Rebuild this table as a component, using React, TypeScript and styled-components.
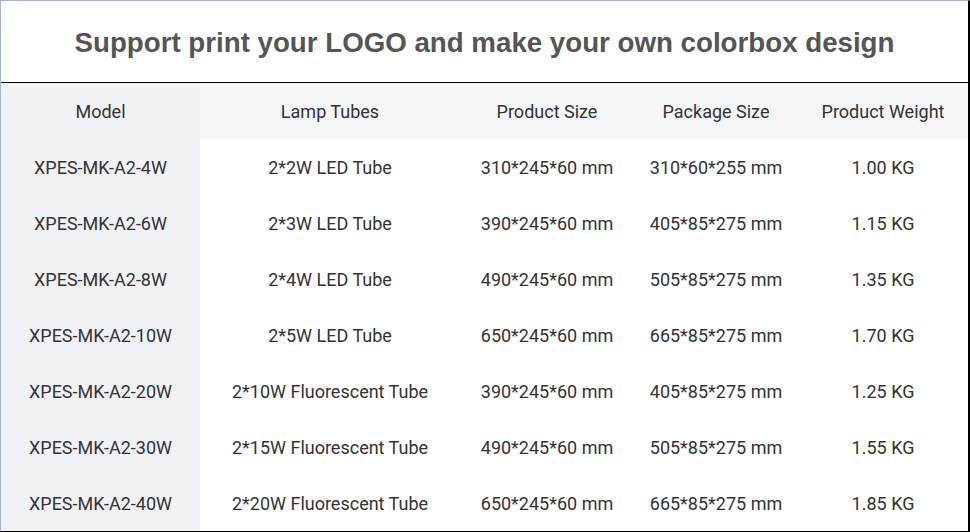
import React from "react";
import styled, { createGlobalStyle } from "styled-components";

const Global = createGlobalStyle`
  html, body { margin: 0; padding: 0; background: #ffffff; }
  * { box-sizing: border-box; }
`;

const Frame = styled.div`
  position: relative;
  width: 970px;
  height: 532px;
  overflow: hidden;
  background: #ffffff;
  border-top: 1px solid #aab3cb;
  border-left: 1px solid #aab3cb;
  border-right: 2px solid #000000;
  border-bottom: 1px solid #000000;
`;

const ScrollMark = styled.div`
  position: absolute;
  left: -1px;
  top: 418px;
  width: 1px;
  height: 57px;
  background: #1fc07a;
`;

const Title = styled.h1`
  margin: 0;
  height: 82px;
  padding-top: 2px;
  display: flex;
  align-items: center;
  justify-content: center;
  font-family: "Liberation Sans", Arial, sans-serif;
  font-weight: 700;
  font-size: 27.7px;
  color: #555555;
  border-bottom: 1px solid #000000;
`;

const Grid = styled.div`
  display: grid;
  grid-template-columns: 199px 260px 174px 164px 170px;
  grid-auto-rows: 56px;
`;

const Cell = styled.div<{ $head?: boolean; $first?: boolean }>`
  display: flex;
  align-items: center;
  justify-content: center;
  font-family: Roboto, "Liberation Sans", sans-serif;
  font-size: 18px;
  color: #333333;
  white-space: nowrap;
  background: ${(p) => (p.$first ? "#f1f2f6" : p.$head ? "#f5f6f8" : "#ffffff")};
`;

const headers = ["Model", "Lamp Tubes", "Product Size", "Package Size", "Product Weight"];

const rows = [
  ["XPES-MK-A2-4W", "2*2W LED Tube", "310*245*60 mm", "310*60*255 mm", "1.00 KG"],
  ["XPES-MK-A2-6W", "2*3W LED Tube", "390*245*60 mm", "405*85*275 mm", "1.15 KG"],
  ["XPES-MK-A2-8W", "2*4W LED Tube", "490*245*60 mm", "505*85*275 mm", "1.35 KG"],
  ["XPES-MK-A2-10W", "2*5W LED Tube", "650*245*60 mm", "665*85*275 mm", "1.70 KG"],
  ["XPES-MK-A2-20W", "2*10W Fluorescent Tube", "390*245*60 mm", "405*85*275 mm", "1.25 KG"],
  ["XPES-MK-A2-30W", "2*15W Fluorescent Tube", "490*245*60 mm", "505*85*275 mm", "1.55 KG"],
  ["XPES-MK-A2-40W", "2*20W Fluorescent Tube", "650*245*60 mm", "665*85*275 mm", "1.85 KG"],
];

export default function App() {
  return (
    <>
      <Global />
      <Frame>
        <ScrollMark />
        <Title>Support print your LOGO and make your own colorbox design</Title>
        <Grid>
          {headers.map((h, i) => (
            <Cell key={h} $head $first={i === 0}>
              {h}
            </Cell>
          ))}
          {rows.map((r) =>
            r.map((c, i) => (
              <Cell key={r[0] + i} $first={i === 0}>
                {c}
              </Cell>
            ))
          )}
        </Grid>
      </Frame>
    </>
  );
}
